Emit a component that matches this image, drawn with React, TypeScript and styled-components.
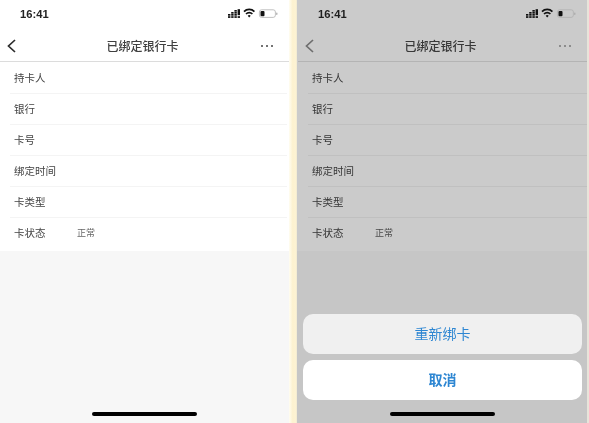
import React from "react";
import styled, { createGlobalStyle } from "styled-components";

const Global = createGlobalStyle`
  html, body { margin: 0; padding: 0; width: 589px; height: 423px; overflow: hidden; background: #e8e4da; }
  #root { width: 589px; height: 423px; }
`;

const Stage = styled.div`
  width: 589px;
  height: 423px;
  display: flex;
  font-family: "Liberation Sans", "Noto Sans CJK SC", sans-serif;
  overflow: hidden;
  filter: blur(0.35px);
`;

const Phone = styled.div<{ $dim?: boolean }>`
  position: relative;
  box-sizing: border-box;
  width: ${(p) => (p.$dim ? 290 : 289)}px;
  padding-left: ${(p) => (p.$dim ? 1 : 0)}px;
  flex: none;
  height: 423px;
  background: ${(p) => (p.$dim ? "#c6c6c6" : "#f7f7f7")};
  display: flex;
  flex-direction: column;
`;

const Gutter = styled.div`
  width: 8px;
  flex: none;
  background: linear-gradient(to right, #fffdf2, #fdf2d0 45%, #fdf3d4 90%, #e4e0d0);
`;

const Edge = styled.div`
  width: 2px;
  flex: none;
  background: #e8e4da;
`;

const Top = styled.div<{ $dim?: boolean }>`
  background: ${(p) => (p.$dim ? "#cbcbcb" : "#ffffff")};
  margin-left: ${(p) => (p.$dim ? -1 : 0)}px;
  padding-left: ${(p) => (p.$dim ? 1 : 0)}px;
  flex: none;
`;

const StatusBar = styled.div`
  height: 28px;
  padding: 0 11px 0 20px;
  display: flex;
  align-items: center;
  justify-content: space-between;
`;

const Time = styled.span<{ $dim?: boolean }>`
  font-size: 11.2px;
  font-weight: 700;
  color: ${(p) => (p.$dim ? "#1e1e1e" : "#222222")};
`;

const StatusIcons = styled.svg`
  width: 50px;
  height: 12px;
`;

const NavBar = styled.div<{ $dim?: boolean }>`
  height: 34px;
  padding: 2px 11px 0 7px;
  box-sizing: border-box;
  display: grid;
  grid-template-columns: 1fr auto 1fr;
  align-items: center;
  border-bottom: 1px solid ${(p) => (p.$dim ? "#b4b4b4" : "#dcdcdc")};
`;

const BackIcon = styled.svg`
  width: 10px;
  height: 14px;
`;

const NavTitle = styled.span<{ $dim?: boolean }>`
  font-size: 12px;
  font-weight: 500;
  color: ${(p) => (p.$dim ? "#383838" : "#404040")};
`;

const More = styled.svg`
  width: 14px;
  height: 4px;
  justify-self: end;
  margin-right: 4px;
`;

const List = styled.div`
  padding-top: 1px;
`;

const Row = styled.div<{ $dim?: boolean; $last?: boolean }>`
  height: 30px;
  box-sizing: content-box;
  margin: 0 ${(p) => (p.$dim ? 0 : 2)}px 0 10px;
  padding: 0 0 0 4px;
  display: flex;
  align-items: center;
  border-bottom: ${(p) =>
    p.$last ? "3px solid transparent" : `1px solid ${p.$dim ? "#c0c0c0" : "#f4f4f4"}`};
`;

const Label = styled.span<{ $dim?: boolean }>`
  width: 63px;
  font-size: 10.5px;
  margin-top: -2px;
  color: ${(p) => (p.$dim ? "#363636" : "#444444")};
`;

const Value = styled.span<{ $dim?: boolean }>`
  font-size: 9px;
  margin-top: -2px;
  color: ${(p) => (p.$dim ? "#4a4a4a" : "#666666")};
`;

const Fill = styled.div`
  flex: 1;
`;

const Home = styled.div`
  position: absolute;
  left: 50%;
  bottom: 7px;
  width: 105px;
  height: 4px;
  margin-left: -52.5px;
  border-radius: 2px;
  background: #000;
`;

const Sheet = styled.div`
  flex: none;
  padding: 0 5px 23px;
  display: flex;
  flex-direction: column;
  gap: 6px;
`;

const SheetButton = styled.div<{ $bg: string; $bold?: boolean }>`
  height: 40px;
  box-sizing: border-box;
  padding-bottom: 3px;
  border-radius: 10px;
  background: ${(p) => p.$bg};
  color: #2d86d2;
  font-size: 14px;
  font-weight: ${(p) => (p.$bold ? 700 : 400)};
  display: flex;
  align-items: center;
  justify-content: center;
`;

const rows: [string, string?][] = [
  ["持卡人"],
  ["银行"],
  ["卡号"],
  ["绑定时间"],
  ["卡类型"],
  ["卡状态", "正常"],
];

const signal: [number, number][] = [
  [0, 6],
  [0, 8.2],
  [3.2, 4],
  [3.2, 6],
  [3.2, 8.2],
  [6.4, 2],
  [6.4, 4],
  [6.4, 6],
  [6.4, 8.2],
];

function Status() {
  return (
    <StatusIcons viewBox="0 0 50 12">
      <g fill="#111">
        {signal.map(([x, y]) => (
          <rect key={`${x}-${y}`} x={x} y={y} width="2.4" height="1.7" />
        ))}
        <rect x="9.6" y="1.2" width="2.4" height="6" />
        <rect x="9.6" y="8.2" width="2.4" height="1.7" />
      </g>
      <path d="M16 3.6a7.2 7.2 0 0 1 10.4 0" fill="none" stroke="#111" strokeWidth="1.7" />
      <path d="M18 6a4.4 4.4 0 0 1 6.4 0" fill="none" stroke="#111" strokeWidth="1.6" />
      <path d="M19.7 7.7a2.1 2.1 0 0 1 3 0L21.2 9.6z" fill="#111" />
      <rect x="31.4" y="1.8" width="16" height="7.6" rx="2.2" fill="none" stroke="#b0b0b0" strokeWidth="0.8" />
      <rect x="32.5" y="2.9" width="4" height="5.4" rx="1" fill="#111" />
      <rect x="48.2" y="4.5" width="1.2" height="2.4" rx="0.6" fill="#a8a8a8" />
    </StatusIcons>
  );
}

function Screen({ dim }: { dim?: boolean }) {
  const stroke = dim ? "#6e6e6e" : "#2c2c2c";
  const dots = dim ? "#777777" : "#444444";
  return (
    <Top $dim={dim}>
      <StatusBar>
        <Time $dim={dim}>16:41</Time>
        <Status />
      </StatusBar>
      <NavBar $dim={dim}>
        <BackIcon viewBox="0 0 10 14">
          <path d="M8 1 1.5 7 8 13" fill="none" stroke={stroke} strokeWidth="1.7" />
        </BackIcon>
        <NavTitle $dim={dim}>已绑定银行卡</NavTitle>
        <More viewBox="0 0 14 4">
          <circle cx="2" cy="2" r="1" fill={dots} />
          <circle cx="7" cy="2" r="1" fill={dots} />
          <circle cx="12" cy="2" r="1" fill={dots} />
        </More>
      </NavBar>
      <List>
        {rows.map(([label, value], i) => (
          <Row key={label} $dim={dim} $last={i === rows.length - 1}>
            <Label $dim={dim}>{label}</Label>
            {value && <Value $dim={dim}>{value}</Value>}
          </Row>
        ))}
      </List>
    </Top>
  );
}

export default function App() {
  return (
    <Stage>
      <Global />
      <Phone>
        <Screen />
        <Home />
      </Phone>
      <Gutter />
      <Phone $dim>
        <Screen dim />
        <Fill />
        <Sheet>
          <SheetButton $bg="#f0f0f0">重新绑卡</SheetButton>
          <SheetButton $bg="#ffffff" $bold>取消</SheetButton>
        </Sheet>
        <Home />
      </Phone>
      <Edge />
    </Stage>
  );
}
